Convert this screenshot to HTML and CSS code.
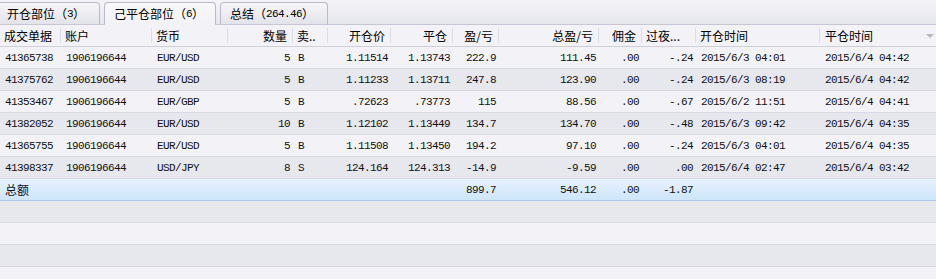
FILE: index.html
```html
<!DOCTYPE html>
<html lang="zh-CN">
<head>
<meta charset="utf-8">
<link rel="stylesheet" href="styles.css">
</head>
<body>
<div class="tabs">
  <div class="tab"><span class="cjk">开仓部位</span><span class="paren">（</span><span class="num">3</span><span class="paren">）</span></div>
  <div class="tab active"><span class="cjk">己平仓部位</span><span class="paren">（</span><span class="num">6</span><span class="paren">）</span>
    <svg class="close" width="8" height="8" viewBox="0 0 8 8"><path d="M1 1L7 7M7 1L1 7" stroke="#6a6a78" stroke-width="2"/></svg>
  </div>
  <div class="tab"><span class="cjk">总结</span><span class="paren">（</span><span class="num">264.46</span><span class="paren">）</span></div>
</div>
<div class="grid">
  <div class="row head">
    <div class="c l">成交单据</div>
    <div class="c l">账户</div>
    <div class="c l">货币</div>
    <div class="c r">数量</div>
    <div class="c l">卖..</div>
    <div class="c r">开仓价</div>
    <div class="c r">平仓</div>
    <div class="c r">盈/亏</div>
    <div class="c r">总盈/亏</div>
    <div class="c r">佣金</div>
    <div class="c l">过夜...</div>
    <div class="c l">开仓时间</div>
    <div class="c l last">平仓时间<span class="tri"></span></div>
  </div>

  <div class="row odd">
    <div class="d l">41365738</div><div class="d l">1906196644</div><div class="d l">EUR/USD</div><div class="d r">5</div><div class="d l">B</div><div class="d r">1.11514</div><div class="d r">1.13743</div><div class="d r">222.9</div><div class="d r">111.45</div><div class="d r">.00</div><div class="d r">-.24</div><div class="d l">2015/6/3 04:01</div><div class="d l">2015/6/4 04:42</div>
  </div>
  <div class="row even">
    <div class="d l">41375762</div><div class="d l">1906196644</div><div class="d l">EUR/USD</div><div class="d r">5</div><div class="d l">B</div><div class="d r">1.11233</div><div class="d r">1.13711</div><div class="d r">247.8</div><div class="d r">123.90</div><div class="d r">.00</div><div class="d r">-.24</div><div class="d l">2015/6/3 08:19</div><div class="d l">2015/6/4 04:42</div>
  </div>
  <div class="row odd">
    <div class="d l">41353467</div><div class="d l">1906196644</div><div class="d l">EUR/GBP</div><div class="d r">5</div><div class="d l">B</div><div class="d r">.72623</div><div class="d r">.73773</div><div class="d r">115</div><div class="d r">88.56</div><div class="d r">.00</div><div class="d r">-.67</div><div class="d l">2015/6/2 11:51</div><div class="d l">2015/6/4 04:41</div>
  </div>
  <div class="row even">
    <div class="d l">41382052</div><div class="d l">1906196644</div><div class="d l">EUR/USD</div><div class="d r">10</div><div class="d l">B</div><div class="d r">1.12102</div><div class="d r">1.13449</div><div class="d r">134.7</div><div class="d r">134.70</div><div class="d r">.00</div><div class="d r">-.48</div><div class="d l">2015/6/3 09:42</div><div class="d l">2015/6/4 04:35</div>
  </div>
  <div class="row odd">
    <div class="d l">41365755</div><div class="d l">1906196644</div><div class="d l">EUR/USD</div><div class="d r">5</div><div class="d l">B</div><div class="d r">1.11508</div><div class="d r">1.13450</div><div class="d r">194.2</div><div class="d r">97.10</div><div class="d r">.00</div><div class="d r">-.24</div><div class="d l">2015/6/3 04:01</div><div class="d l">2015/6/4 04:35</div>
  </div>
  <div class="row even">
    <div class="d l">41398337</div><div class="d l">1906196644</div><div class="d l">USD/JPY</div><div class="d r">8</div><div class="d l">S</div><div class="d r">124.164</div><div class="d r">124.313</div><div class="d r">-14.9</div><div class="d r">-9.59</div><div class="d r">.00</div><div class="d r">.00</div><div class="d l">2015/6/4 02:47</div><div class="d l">2015/6/4 03:42</div>
  </div>
  <div class="row total">
    <div class="d l cjk">总额</div><div class="d"></div><div class="d"></div><div class="d"></div><div class="d"></div><div class="d"></div><div class="d"></div><div class="d r">899.7</div><div class="d r">546.12</div><div class="d r">.00</div><div class="d r">-1.87</div><div class="d"></div><div class="d"></div>
  </div>
  <div class="row even empty"></div>
  <div class="row odd empty"></div>
  <div class="row even empty"></div>
  <div class="row odd empty"></div>
</div>
</body>
</html>
```

FILE: styles.css
```css
* { box-sizing: border-box; }
html, body { margin: 0; padding: 0; }
body {
  width: 936px;
  height: 279px;
  overflow: hidden;
  background: #f3f3f7;
  font-family: "Noto Sans CJK SC", "Liberation Sans", sans-serif;
  font-size: 12px;
  color: #000;
}
.tabs {
  height: 25px;
  display: flex;
  align-items: flex-end;
  gap: 4px;
  background: linear-gradient(#f4f4f8, #e6e6ee);
  border-bottom: 1px solid #c6c6d4;
  padding-left: 0;
}
.tab {
  height: 23px;
  margin-bottom: -1px;
  display: flex;
  align-items: center;
  padding: 0 6px 0 7px;
  border: 1px solid #b9b9ca;
  border-bottom-color: #c6c6d4;
  border-radius: 4px 4px 0 0;
  background: linear-gradient(#f7f7fa, #e2e2ea);
  white-space: nowrap;
  line-height: 14px;
}
.tab:nth-child(1) { width: 100px; border-left: none; border-top-left-radius: 0; }
.tab:nth-child(2) { width: 112px; padding-left: 9px; }
.tab:nth-child(3) { width: 108px; padding-left: 9px; }
.tab.active {
  background: linear-gradient(#f8f8fb, #f3f3f7);
  border-bottom-color: #f3f3f7;
}
.tab .cjk { font-size: 12px; }
.tab .paren { font-size: 12px; }
.tab .num {
  font-family: "Liberation Mono", monospace;
  font-size: 11px;
  letter-spacing: -0.6px;
}
.close { margin-left: 9px; }

.row {
  display: grid;
  grid-template-columns: 61px 91px 76px 65px 35px 63px 62px 46px 100px 43px 54px 124px 116px;
  height: 22px;
  border-bottom: 1px solid #d9d9e2;
}
.head {
  background: #f3f3f7;
  border-bottom: 1px solid #cfcfda;
}
.c {
  display: flex;
  align-items: center;
  height: 21px;
  padding: 0 5px;
  white-space: nowrap;
  overflow: hidden;
  border-right: 1px solid #dcdce4;
  background-clip: padding-box;
}
.head .c { border-right: none; box-shadow: inset -1px 0 0 0 transparent; position: relative; }
.head .c::after {
  content: "";
  position: absolute;
  right: 0;
  top: 3px;
  bottom: 3px;
  width: 1px;
  background: #dcdce4;
}
.head .c.last::after { display: none; }
.c.l { justify-content: flex-start; padding-left: 4px; }
.c.r { justify-content: flex-end; padding-right: 6px; }
.c.last { justify-content: space-between; padding-right: 2px; padding-left: 5px; }
.tri {
  width: 0; height: 0;
  border-left: 4px solid transparent;
  border-right: 4px solid transparent;
  border-top: 4px solid #b8b8c4;
}

.d {
  display: flex;
  align-items: center;
  height: 21px;
  padding: 0 4px;
  white-space: nowrap;
  font-family: "Liberation Mono", monospace;
  font-size: 11px;
  letter-spacing: -0.6px;
  color: #111;
}
.d.l { justify-content: flex-start; padding-left: 5px; }
.d.r { justify-content: flex-end; padding-right: 3px; }
.d.cjk { font-family: "Noto Sans CJK SC", sans-serif; font-size: 12px; letter-spacing: 0; }

.odd { background: #f3f3f7; }
.even { background: #e7e7ee; }
.total {
  background: linear-gradient(#e6f2fe, #cfe5fa);
  border-bottom: 1px solid #a9cbe8;
}
```
